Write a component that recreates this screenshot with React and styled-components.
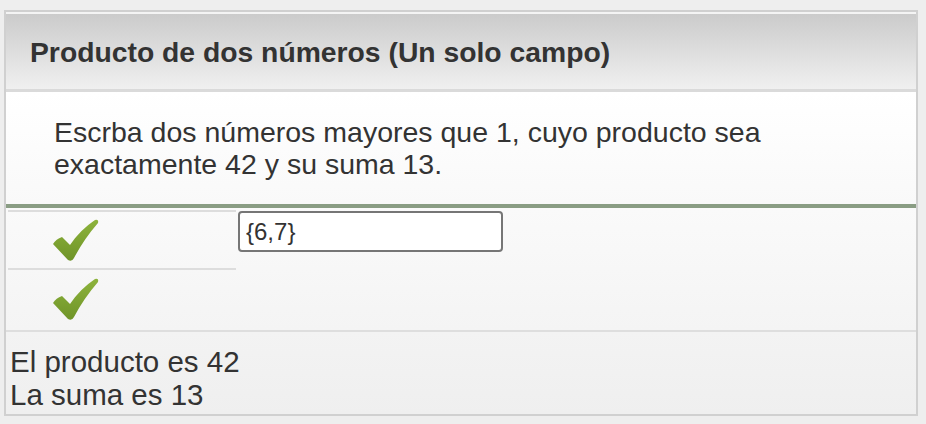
import styled, { createGlobalStyle } from "styled-components"

const GlobalStyle = createGlobalStyle`
    body {
        margin: 0;
        background: #eeeeee;
        font-family: "Liberation Sans", Arial, Helvetica, sans-serif;
        color: #333333;
    }
`

const Check = () => (
    <svg width="46" height="43" viewBox="0 0 46 43">
        <defs>
            <linearGradient id="chk" x1="0" y1="0" x2="0" y2="1">
                <stop offset="0" stopColor="#8db33c" />
                <stop offset="1" stopColor="#6f9428" />
            </linearGradient>
        </defs>
        <path
            d="M0 25 Q3 20 9 18 L17 26 Q27 11 42 1 Q46 0 45 4 Q31 20 21 39 Q19 43 15 41 Z"
            fill="url(#chk)"
        />
    </svg>
)

const App = () => {
    return (
        <Page>
            <GlobalStyle />
            <Box>
                <Header>
                    <Title>Producto de dos números (Un solo campo)</Title>
                </Header>

                <Question>
                    Escrba dos números mayores que 1, cuyo producto sea
                    exactamente 42 y su suma 13.
                </Question>

                <Rows>
                    <CheckCell tall={58}> <Check /> </CheckCell>
                    <AnswerCell>
                        <Answer type="text" defaultValue="{6,7}" />
                    </AnswerCell>
                    <CheckCell tall={60}> <Check /> </CheckCell>
                    <AnswerCell />
                </Rows>

                <Feedback>
                    <Line>El producto es 42</Line>
                    <Line>La suma es 13</Line>
                </Feedback>
            </Box>
        </Page>
    )
}

// ///// Style //////
const Page = styled.div`
    padding: 10px 8px 8px 4px;
`
const Box = styled.div`
    width: 910px;
    border: 2px solid #d0d0d0;
    background: #f4f4f4;
`

// Header
const Header = styled.div`
    border-top: 2px solid #f4f4f4;
    border-bottom: 3px solid #dadada;
    background: linear-gradient(to bottom, #cbcbcb, #f0f0f0);
    padding: 22px 24px 21px;
`
const Title = styled.h1`
    margin: 0;
    font-size: 28.3px;
    line-height: 32px;
    font-weight: bold;
    color: #333333;
`

// Question
const Question = styled.div`
    background: linear-gradient(to bottom, #ffffff, #f9f9f9);
    padding: 24px 48px 24px 48px;
    font-size: 28.5px;
    line-height: 32px;
    border-bottom: 4px solid #8a9d84;
`

// Answer rows
const Rows = styled.div`
    display: grid;
    grid-template-columns: 228px 1fr;
    column-gap: 2px;
    padding: 2px;
    background: linear-gradient(to bottom, #fafafa, #f4f4f4);
`
const CheckCell = styled.div`
    height: ${props => props.tall}px;
    box-sizing: border-box;
    border-top: 2px solid #dddddd;
    display: flex;
    align-items: center;
    padding-left: 45px;
`
const AnswerCell = styled.div`
    padding-top: 1px;
`
const Answer = styled.input`
    box-sizing: border-box;
    width: 265px;
    height: 41px;
    border: 2px solid #767676;
    border-radius: 4px;
    background: #ffffff;
    padding: 0 6px;
    font-family: "Liberation Sans", Arial, Helvetica, sans-serif;
    font-size: 24px;
    color: #333333;
    outline: none;
`

// Feedback
const Feedback = styled.div`
    border-top: 2px solid #dedede;
    background: linear-gradient(to bottom, #f3f3f3, #efefef);
    padding: 13px 4px 3px;
    font-size: 29.5px;
    line-height: 33px;
`
const Line = styled.div``

export default App
